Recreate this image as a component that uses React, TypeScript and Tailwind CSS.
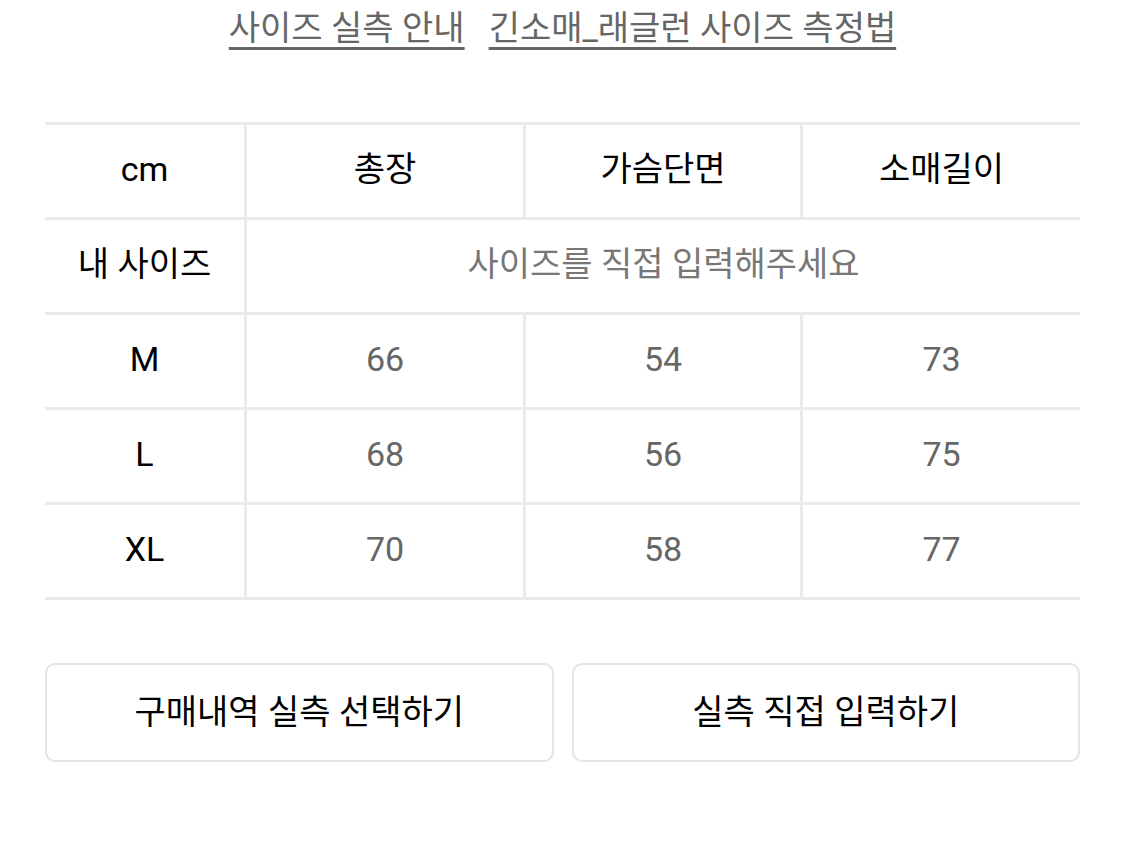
const cols = ["총장", "가슴단면", "소매길이"];
const rows = [
  { size: "M", values: ["66", "54", "73"] },
  { size: "L", values: ["68", "56", "75"] },
  { size: "XL", values: ["70", "58", "77"] },
];

export default function App() {
  return (
    <div className="w-[1125px] h-[863px] bg-white px-[45px] font-['Roboto','Noto_Sans_CJK_KR',sans-serif]">
      {/* guide links */}
      <div className="flex justify-center gap-6 h-[122px] pt-[6px]">
        <a className="text-[34px] leading-[44px] text-[#666] underline decoration-[3px] underline-offset-[7px]">
          사이즈 실측 안내
        </a>
        <a className="text-[34px] leading-[44px] text-[#666] underline decoration-[3px] underline-offset-[7px]">
          긴소매_래글런 사이즈 측정법
        </a>
      </div>

      {/* size table */}
      <div className="border-t-[3px] border-[#ebebeb]">
        <div className="grid grid-cols-[202px_279px_277px_277px] h-[95px] border-b-[3px] border-[#ebebeb]">
          <div className="flex items-center justify-center pb-1 border-r-[3px] border-[#ebebeb] text-[34px] text-black">cm</div>
          {cols.map((c, i) => (
            <div
              key={c}
              className={`flex items-center justify-center pb-1 text-[34px] text-black ${i < 2 ? "border-r-[3px] border-[#ebebeb]" : ""}`}
            >
              {c}
            </div>
          ))}
        </div>
        <div className="grid grid-cols-[202px_1fr] h-[95px] border-b-[3px] border-[#ebebeb]">
          <div className="flex items-center justify-center pb-1 border-r-[3px] border-[#ebebeb] text-[34px] text-black">내 사이즈</div>
          <div className="flex items-center justify-center pb-1 text-[34px] text-[#777]">사이즈를 직접 입력해주세요</div>
        </div>
        {rows.map((r) => (
          <div key={r.size} className="grid grid-cols-[202px_279px_277px_277px] h-[95px] border-b-[3px] border-[#ebebeb]">
            <div className="flex items-center justify-center pb-1 border-r-[3px] border-[#ebebeb] text-[34px] text-black">{r.size}</div>
            {r.values.map((v, i) => (
              <div
                key={i}
                className={`flex items-center justify-center pb-1 text-[34px] text-[#666] ${i < 2 ? "border-r-[3px] border-[#ebebeb]" : ""}`}
              >
                {v}
              </div>
            ))}
          </div>
        ))}
      </div>

      {/* actions */}
      <div className="grid grid-cols-2 gap-[18px] mt-[63px]">
        <button className="h-[99px] rounded-[10px] border-2 border-[#e4e4e4] bg-white text-[34px] text-black">
          구매내역 실측 선택하기
        </button>
        <button className="h-[99px] rounded-[10px] border-2 border-[#e4e4e4] bg-white text-[34px] text-black">
          실측 직접 입력하기
        </button>
      </div>
    </div>
  );
}
